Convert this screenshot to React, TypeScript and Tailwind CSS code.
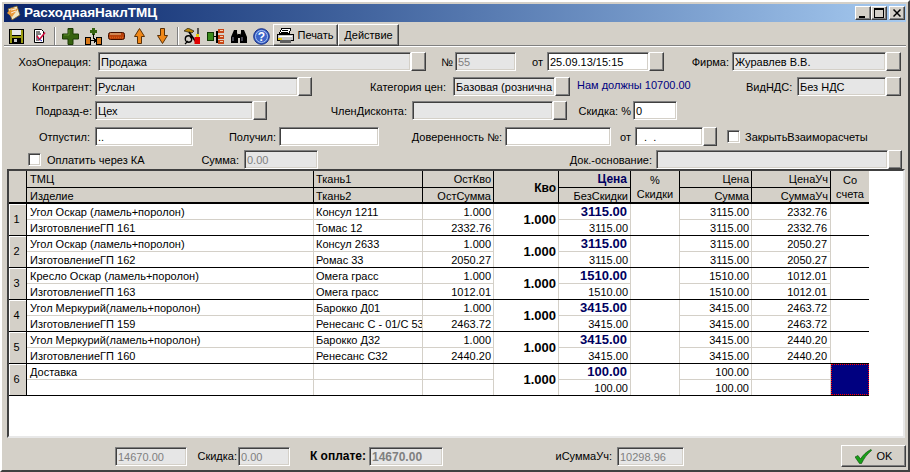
import type { ReactNode } from "react";

const FONT = "font-['Liberation_Sans',Arial,sans-serif]";
const GRID_COLS = "grid-cols-[18px_287px_109px_71px_65px_72px_49px_72px_79px_38px]";

function Field({ className, value, on, gray }: { className: string; value?: string; on?: boolean; gray?: boolean }) {
  return (
    <div
      className={`${className} h-[19px] shrink-0 overflow-hidden whitespace-pre border border-t-[#808080] border-l-[#808080] border-r-white border-b-white pl-[2px] leading-[18px] shadow-[inset_1px_1px_0_#404040,inset_-1px_-1px_0_#d4d0c8] ${
        on ? "bg-white" : "bg-[#e6e6e6]"
      } ${gray ? "text-[#808080]" : "text-black"}`}
    >
      {value}
    </div>
  );
}

function Btn({ className = "w-[15px]" }: { className?: string }) {
  return (
    <div className={`${className} h-[19px] shrink-0 border border-t-white border-l-white border-r-[#404040] border-b-[#404040] bg-[#d4d0c8] shadow-[inset_-1px_-1px_0_#808080]`} />
  );
}

function Label({ className, children }: { className: string; children: ReactNode }) {
  return <div className={`${className} shrink-0 whitespace-nowrap text-right leading-[21px]`}>{children}</div>;
}

function Check({ className }: { className: string }) {
  return (
    <div className={`${className} h-[13px] w-[13px] shrink-0 border border-t-[#808080] border-l-[#808080] border-r-white border-b-white bg-white shadow-[inset_1px_1px_0_#404040,inset_-1px_-1px_0_#d4d0c8]`} />
  );
}

function WinBtn({ children, className = "" }: { children: ReactNode; className?: string }) {
  return (
    <div className={`${className} flex h-[14px] w-[16px] items-center justify-center border border-t-white border-l-white border-r-[#404040] border-b-[#404040] bg-[#d4d0c8] shadow-[inset_-1px_-1px_0_#808080]`}>
      {children}
    </div>
  );
}

function ToolIcon({ children }: { children: ReactNode }) {
  return <div className="flex h-[22px] w-[23px] shrink-0 items-center justify-center pt-[2px]">{children}</div>;
}

function Sep({ className }: { className: string }) {
  return <div className={`${className} mt-[2px] h-[18px] w-[2px] shrink-0 border-l border-l-[#808080] border-r border-r-white`} />;
}

function SaveIcon() {
  return (
    <svg width="15" height="15" viewBox="0 0 15 15" shapeRendering="crispEdges">
      <rect x="0.5" y="0.5" width="14" height="14" fill="#9a9a10" stroke="#000" />
      <rect x="3" y="1" width="9" height="6" fill="#e8e8e8" />
      <rect x="3" y="6" width="9" height="1" fill="#000" />
      <rect x="3" y="9" width="9" height="5" fill="#000" />
      <rect x="5" y="10" width="3" height="3" fill="#c8c8c8" />
    </svg>
  );
}

function DocCheckIcon() {
  return (
    <svg width="13" height="14" viewBox="0 0 13 14">
      <path d="M1.5.5h7l2 2v11h-9z" fill="#fff" stroke="#000" />
      <path d="M3 3h4M3 5h5M3 7h2M3 9h2M3 11h3" stroke="#000" strokeWidth="1" />
      <path d="M4 7l2.5 3.5L12 3.5" fill="none" stroke="#d01040" strokeWidth="1.6" />
      <path d="M6 10l3 2" stroke="#2030c0" strokeWidth="1" />
    </svg>
  );
}

function PlusIcon() {
  return (
    <svg width="17" height="17" viewBox="0 0 17 17">
      <path d="M6 .5h5v5.5h5.5v5H11v5.5H6V11H.5V6H6z" fill="#36620f" stroke="#1d3a06" strokeLinejoin="round" />
      <path d="M7 2v5H2" fill="none" stroke="#5c8a2c" />
    </svg>
  );
}

function AddLinkIcon() {
  return (
    <svg width="17" height="17" viewBox="0 0 17 17" shapeRendering="crispEdges">
      <path d="M7 0h3v2h2v3h-2v2H7V5H5V2h2z" fill="#36620f" stroke="none" />
      <rect x="0.5" y="9.5" width="5" height="6.5" fill="#d87818" stroke="#000" />
      <rect x="11.5" y="9.5" width="5" height="6.5" fill="#d87818" stroke="#000" />
      <path d="M6 12h5v1H6z" fill="#000" />
      <path d="M8 6h1v5H8zM10 11h1v3h-1zM9 10h1v5H9z" fill="#000" />
    </svg>
  );
}

function MinusIcon() {
  return (
    <svg width="17" height="8" viewBox="0 0 17 8">
      <rect x="0.5" y="0.5" width="16" height="7" rx="2" fill="#b8420c" stroke="#401000" />
      <path d="M2 2h11" stroke="#e8d0a0" strokeWidth="1" />
      <path d="M2 5.5h13" stroke="#d86018" strokeWidth="1.5" strokeDasharray="1 1" />
    </svg>
  );
}

function ArrowIcon({ down }: { down?: boolean }) {
  return (
    <svg width="11" height="16" viewBox="0 0 11 16" className={down ? "rotate-180" : ""}>
      <path d="M5.5.5l5 8H7.5v7h-4v-7H.5z" fill="#f08818" stroke="#583008" />
    </svg>
  );
}

function ToolsIcon() {
  return (
    <svg width="17" height="17" viewBox="0 0 17 17">
      <path d="M0 3l4-3 6 3-2 2z" fill="#b88808" stroke="#000" strokeWidth="0.6" />
      <path d="M5 4l7 10" stroke="#000" strokeWidth="1.6" />
      <path d="M14 0v8" stroke="#000" strokeWidth="1.2" />
      <circle cx="4.5" cy="11" r="3.2" fill="none" stroke="#000" strokeWidth="1.4" />
      <path d="M1 16l3-3M8 9l-2 1" stroke="#000" strokeWidth="1.2" />
      <rect x="10.5" y="9" width="5.5" height="7" fill="#e00000" />
      <rect x="12" y="6" width="3" height="3" fill="#e8c810" />
    </svg>
  );
}

function TreeIcon() {
  return (
    <svg width="17" height="15" viewBox="0 0 17 15" shapeRendering="crispEdges">
      <rect x="0.5" y="3.5" width="6" height="8" fill="#3c8c1c" stroke="#103804" />
      <path d="M7 7h2M9 2h1v11H9zM10 2h1M10 7h1M10 12h1" stroke="#000" fill="none" />
      <rect x="11" y="0" width="6" height="4" fill="#c84818" stroke="none" />
      <rect x="11" y="5.5" width="6" height="4" fill="#c84818" stroke="none" />
      <rect x="11" y="11" width="6" height="4" fill="#c84818" stroke="none" />
      <path d="M13 1h3M13 7h3M13 12h3" stroke="#f0d0b0" />
    </svg>
  );
}

function BinocularsIcon() {
  return (
    <svg width="16" height="13" viewBox="0 0 16 13">
      <path d="M3 0h3v3l1 2v8H0V7z" fill="#000" />
      <path d="M13 0h-3v3L9 5v8h7V7z" fill="#000" />
      <rect x="7" y="4" width="2" height="4" fill="#000" />
      <path d="M2 7v4M11 7v4" stroke="#9090a8" strokeWidth="1" />
    </svg>
  );
}

function HelpIcon() {
  return (
    <svg width="17" height="17" viewBox="0 0 17 17">
      <circle cx="8.5" cy="8.5" r="7.8" fill="#3c64c8" stroke="#102880" strokeWidth="1" />
      <circle cx="8.5" cy="8.5" r="6" fill="none" stroke="#a8c0f0" strokeWidth="1" />
      <text x="8.5" y="13" textAnchor="middle" fontSize="12" fontWeight="bold" fill="#fff" fontFamily="Liberation Sans">?</text>
    </svg>
  );
}

function PrinterIcon() {
  return (
    <svg width="17" height="15" viewBox="0 0 17 15" shapeRendering="crispEdges">
      <path d="M4.5.5h9l-1 5h-10z" fill="#fff" stroke="#000" />
      <path d="M5 2h6M4 4h7" stroke="#000" />
      <path d="M.5 6.5h16v6h-16z" fill="#c8c8c8" stroke="#000" />
      <path d="M2 8h13" stroke="#fff" />
      <rect x="1" y="10" width="4" height="2" fill="#e8c810" />
      <rect x="3" y="12" width="11" height="2.5" fill="#606060" stroke="none" />
    </svg>
  );
}

function OkCheck() {
  return (
    <svg width="17" height="15" viewBox="0 0 17 15">
      <path d="M0 8l3-1.5 2.5 3.5C8 6 11.500 2.500 16 .5l.8.8C12 5 9 9.500 6.500 14.500H4.500z" fill="#18a018" stroke="#084808" strokeWidth="0.6" />
    </svg>
  );
}

function RaisedButton({ className, children }: { className: string; children: ReactNode }) {
  return (
    <div className={`${className} relative z-10 flex shrink-0 items-center justify-center border border-t-white border-l-white border-r-[#404040] border-b-[#404040] bg-[#d4d0c8] shadow-[inset_-1px_-1px_0_#808080]`}>
      {children}
    </div>
  );
}

type Row = {
  n: number;
  name: string;
  name2: string;
  t1: string;
  t2: string;
  ost: string;
  ostSum: string;
  price: string;
  priceUch: string;
  selected?: boolean;
};

const rows: Row[] = [
  { n: 1, name: "Угол Оскар (ламель+поролон)", name2: "ИзготовлениеГП 161", t1: "Консул 1211", t2: "Томас 12", ost: "1.000", ostSum: "2332.76", price: "3115.00", priceUch: "2332.76" },
  { n: 2, name: "Угол Оскар (ламель+поролон)", name2: "ИзготовлениеГП 162", t1: "Консул 2633", t2: "Ромас 33", ost: "1.000", ostSum: "2050.27", price: "3115.00", priceUch: "2050.27" },
  { n: 3, name: "Кресло Оскар (ламель+поролон)", name2: "ИзготовлениеГП 163", t1: "Омега грасс", t2: "Омега грасс", ost: "1.000", ostSum: "1012.01", price: "1510.00", priceUch: "1012.01" },
  { n: 4, name: "Угол Меркурий(ламель+поролон)", name2: "ИзготовлениеГП 159", t1: "Барокко Д01", t2: "Ренесанс С - 01/С 53", ost: "1.000", ostSum: "2463.72", price: "3415.00", priceUch: "2463.72" },
  { n: 5, name: "Угол Меркурий(ламель+поролон)", name2: "ИзготовлениеГП 160", t1: "Барокко Д32", t2: "Ренесанс С32", ost: "1.000", ostSum: "2440.20", price: "3415.00", priceUch: "2440.20" },
  { n: 6, name: "Доставка", name2: "", t1: "", t2: "", ost: "", ostSum: "", price: "100.00", priceUch: "", selected: true },
];

function HCell({ className = "", children }: { className?: string; children?: ReactNode }) {
  return <div className={`${className} overflow-hidden whitespace-nowrap bg-[#d4d0c8] pt-[1px] leading-[15px]`}>{children}</div>;
}

function DCell({ className = "", children }: { className?: string; children?: ReactNode }) {
  return <div className={`${className} overflow-hidden whitespace-nowrap border-r border-r-[#d4d0c8] pt-[1px] leading-[14px]`}>{children}</div>;
}

function DataRow({ r }: { r: Row }) {
  return (
    <div className={`grid ${GRID_COLS} h-[32px] grid-rows-[16px_15px] border-b border-b-black`}>
      <div className="row-span-2 flex items-center justify-center border-r border-r-black bg-[#d4d0c8] pr-[2px] shadow-[inset_1px_1px_0_#fff]">{r.n}</div>
      <DCell className="col-start-2 border-b border-b-[#d4d0c8] pl-[3px]">{r.name}</DCell>
      <DCell className="col-start-3 border-b border-b-[#d4d0c8] pl-[2px]">{r.t1}</DCell>
      <DCell className="col-start-4 border-b border-b-[#d4d0c8] pr-[2px] text-right">{r.ost}</DCell>
      <DCell className="col-start-5 row-span-2 flex items-center justify-end pr-[2px] text-[13px] font-bold">1.000</DCell>
      <DCell className="col-start-6 border-b border-b-[#d4d0c8] pr-[3px] text-right text-[13px] font-bold text-[#000060]">{r.price}</DCell>
      <DCell className="col-start-7 row-span-2" />
      <DCell className="col-start-8 border-b border-b-[#d4d0c8] pr-[2px] text-right">{r.price}</DCell>
      <DCell className="col-start-9 border-b border-b-[#d4d0c8] pr-[3px] text-right">{r.priceUch}</DCell>
      {r.selected ? (
        <div className="col-start-10 row-span-2 row-start-1 border border-dotted border-[#ff0000] bg-[#000080]" />
      ) : (
        <div className="col-start-10 row-span-2 row-start-1" />
      )}
      <DCell className="col-start-2 row-start-2 pl-[3px]">{r.name2}</DCell>
      <DCell className="col-start-3 row-start-2 pl-[2px]">{r.t2}</DCell>
      <DCell className="col-start-4 row-start-2 pr-[2px] text-right">{r.ostSum}</DCell>
      <DCell className="col-start-6 row-start-2 pr-[2px] text-right">{r.price}</DCell>
      <DCell className="col-start-8 row-start-2 pr-[2px] text-right">{r.price}</DCell>
      <DCell className="col-start-9 row-start-2 pr-[3px] text-right">{r.priceUch}</DCell>
    </div>
  );
}

function Header() {
  return (
    <div className={`grid ${GRID_COLS} h-[33px] grid-rows-[17px_16px]`}>
      <HCell className="row-span-2 border-r border-r-black border-b-2 border-b-black" />
      <HCell className="border-r border-r-black border-b border-b-black pl-[3px]">ТМЦ</HCell>
      <HCell className="border-r border-r-black border-b border-b-black pl-[2px]">Ткань1</HCell>
      <HCell className="border-r border-r-black border-b border-b-black pr-[2px] text-right">ОстКво</HCell>
      <HCell className="row-span-2 flex items-center justify-end border-r border-r-black border-b-2 border-b-black pr-[2px] pt-[3px] text-[12px] font-bold">Кво</HCell>
      <HCell className="border-r border-r-black border-b border-b-black pr-[3px] text-right text-[12px] font-bold text-[#000060]">Цена</HCell>
      <HCell className="row-span-2 border-r border-r-black border-b-2 border-b-black pt-[2px] text-center !leading-[14px]">
        %<br />Скидки
      </HCell>
      <HCell className="border-r border-r-black border-b border-b-black pr-[2px] text-right">Цена</HCell>
      <HCell className="border-r border-r-black border-b border-b-black pr-[2px] text-right">ЦенаУч</HCell>
      <HCell className="row-span-2 border-b-2 border-b-black pt-[2px] text-center !leading-[14px]">
        Со<br />счета
      </HCell>
      <HCell className="col-start-2 row-start-2 border-r border-r-black border-b-2 border-b-black pl-[3px]">Изделие</HCell>
      <HCell className="col-start-3 row-start-2 border-r border-r-black border-b-2 border-b-black pl-[2px]">Ткань2</HCell>
      <HCell className="col-start-4 row-start-2 border-r border-r-black border-b-2 border-b-black pr-[2px] text-right">ОстСумма</HCell>
      <HCell className="col-start-6 row-start-2 border-r border-r-black border-b-2 border-b-black pr-[2px] text-right">БезСкидки</HCell>
      <HCell className="col-start-8 row-start-2 border-r border-r-black border-b-2 border-b-black pr-[2px] text-right">Сумма</HCell>
      <HCell className="col-start-9 row-start-2 border-r border-r-black border-b-2 border-b-black pr-[2px] text-right">СуммаУч</HCell>
    </div>
  );
}

export default function App() {
  return (
    <div className={`${FONT} h-[472px] w-[910px] overflow-hidden border-2 border-t-white border-l-white border-r-[#404040] border-b-[#404040] bg-[#d4d0c8] pt-[2px] text-[11px] text-black`}>
      <div className="-ml-[2px] w-[910px]">
        {/* title bar */}
        <div className="mx-[4px] flex h-[18px] items-center bg-gradient-to-r from-[#0a246a] to-[#a6caf0]">
          <svg width="16" height="16" viewBox="0 0 16 16" className="ml-[2px] shrink-0">
            <path d="M2 4l9-3 3 9-8 5z" fill="#f0e8c8" stroke="#806020" strokeWidth="0.8" />
            <path d="M1 8l5-5 6 1-6 8z" fill="#e89838" />
            <path d="M5 5l5-1M5 8l5-2" stroke="#fff" strokeWidth="0.8" />
          </svg>
          <span className="ml-[2px] text-[13.5px] font-bold text-white">РасходнаяНаклТМЦ</span>
          <div className="ml-auto mr-[1px] flex">
            <WinBtn>
              <div className="mt-[7px] mr-[3px] h-[2px] w-[6px] bg-black" />
            </WinBtn>
            <WinBtn>
              <div className="h-[10px] w-[10px] border border-t-2 border-black" />
            </WinBtn>
            <WinBtn className="ml-[2px]">
              <svg width="8" height="8" viewBox="0 0 8 8">
                <path d="M0.500 0.500l7 7M7.500 0.500l-7 7" stroke="#000" strokeWidth="1.5" />
              </svg>
            </WinBtn>
          </div>
        </div>

        {/* toolbar */}
        <div className="mt-[2px] flex h-[22px] items-center pl-[5px]">
          <ToolIcon><SaveIcon /></ToolIcon>
          <ToolIcon><DocCheckIcon /></ToolIcon>
          <Sep className="ml-[3px]" />
          <div className="ml-[3px] flex">
            <ToolIcon><PlusIcon /></ToolIcon>
            <ToolIcon><AddLinkIcon /></ToolIcon>
            <ToolIcon><MinusIcon /></ToolIcon>
            <ToolIcon><ArrowIcon /></ToolIcon>
            <ToolIcon><ArrowIcon down /></ToolIcon>
          </div>
          <Sep className="ml-[3px]" />
          <div className="ml-[2px] flex">
            <ToolIcon><ToolsIcon /></ToolIcon>
            <ToolIcon><TreeIcon /></ToolIcon>
            <ToolIcon><BinocularsIcon /></ToolIcon>
            <ToolIcon><HelpIcon /></ToolIcon>
          </div>
          <RaisedButton className="h-[22px] w-[65px] gap-[3px]">
            <PrinterIcon />
            <span>Печать</span>
          </RaisedButton>
          <RaisedButton className="h-[22px] w-[61px]">Действие</RaisedButton>
        </div>
        <div className="mx-[4px] -mt-[1px] h-[2px] border-t border-t-[#808080] border-b border-b-white" />

        {/* form rows */}
        <div className="mt-[5px] flex h-[19px]">
          <Label className="w-[91px]">ХозОперация:</Label>
          <Field className="ml-[7px] w-[313px]" value="Продажа" />
          <Btn />
          <Label className="ml-[15px] w-[12px]">№</Label>
          <Field className="ml-[2px] w-[61px]" value="55" gray />
          <Label className="ml-[16px] w-[11px]">от</Label>
          <Field className="ml-[4px] w-[102px]" value="25.09.13/15:15" on />
          <Btn />
          <Label className="w-[65px]">Фирма:</Label>
          <Field className="ml-[3px] w-[154px]" value="Журавлев В.В." />
          <Btn />
        </div>
        <div className="mt-[6px] flex h-[19px]">
          <Label className="w-[92px]">Контрагент:</Label>
          <Field className="ml-[3px] w-[203px]" value="Руслан" />
          <Btn className="w-[14px]" />
          <Label className="w-[134px]">Категория цен:</Label>
          <Field className="ml-[7px] w-[102px]" value="Базовая (рознична" />
          <Btn />
          <div className="ml-[7px] w-[169px] shrink-0 leading-[17px] text-[#000080]">Нам должны 10700.00</div>
          <Label className="w-[46px]">ВидНДС:</Label>
          <Field className="ml-[5px] w-[89px]" value="Без НДС" />
          <Btn />
        </div>
        <div className="mt-[5px] flex h-[19px]">
          <Label className="w-[92px]">Подразд-е:</Label>
          <Field className="ml-[3px] w-[158px]" value="Цех" />
          <Btn className="w-[14px]" />
          <Label className="w-[140px]">ЧленДисконта:</Label>
          <Field className="ml-[5px] w-[141px]" />
          <Btn className="w-[14px]" />
          <Label className="w-[64px]">Скидка: %</Label>
          <Field className="ml-[2px] w-[44px]" value="0" on />
        </div>
        <div className="mt-[7px] flex h-[19px]">
          <Label className="w-[90px]">Отпустил:</Label>
          <Field className="ml-[5px] w-[98px]" value=".." on />
          <Label className="w-[83px]">Получил:</Label>
          <Field className="ml-[3px] w-[100px]" on />
          <Label className="w-[123px]">Доверенность №:</Label>
          <Field className="ml-[3px] w-[106px]" on />
          <Label className="w-[20px]">от</Label>
          <Field className="ml-[4px] w-[68px]" value="  .  ." on />
          <Btn className="w-[14px]" />
          <Check className="ml-[10px] mt-[3px]" />
          <Label className="ml-[5px] w-[126px] !text-left">ЗакрытьВзаиморасчеты</Label>
        </div>
        <div className="mt-[4px] flex h-[19px]">
          <Check className="ml-[28px] mt-[3px]" />
          <Label className="ml-[6px] w-[120px] !text-left">Оплатить через КА</Label>
          <Label className="w-[72px]">Сумма:</Label>
          <Field className="ml-[5px] w-[74px]" value="0.00" gray />
          <Label className="w-[334px]">Док.-основание:</Label>
          <Field className="ml-[4px] w-[232px]" />
          <Btn className="w-[14px]" />
        </div>

        {/* grid */}
        <div className="ml-[7px] h-[269px] w-[898px] overflow-hidden border-2 border-t-[#404040] border-l-[#404040] border-r-[#e8e8e8] border-b-[#e8e8e8] bg-white">
          <div className="w-[860px]">
            <Header />
            {rows.map((r) => (
              <DataRow key={r.n} r={r} />
            ))}
          </div>
        </div>

        {/* footer */}
        <div className="mt-[7px] flex h-[22px] items-center">
          <Field className="ml-[115px] w-[72px]" value="14670.00" gray />
          <Label className="w-[50px]">Скидка:</Label>
          <Field className="ml-[1px] w-[52px]" value="0.00" gray />
          <Label className="w-[76px] text-[12px] font-bold">К оплате:</Label>
          <Field className="ml-[3px] w-[74px] text-[12px] font-bold" value="14670.00" gray />
          <Label className="w-[169px]">иСуммаУч:</Label>
          <Field className="ml-[5px] w-[67px]" value="10298.96" gray />
          <RaisedButton className="ml-[157px] h-[22px] w-[65px] gap-[5px]">
            <OkCheck />
            <span>OK</span>
          </RaisedButton>
        </div>
      </div>
    </div>
  );
}
